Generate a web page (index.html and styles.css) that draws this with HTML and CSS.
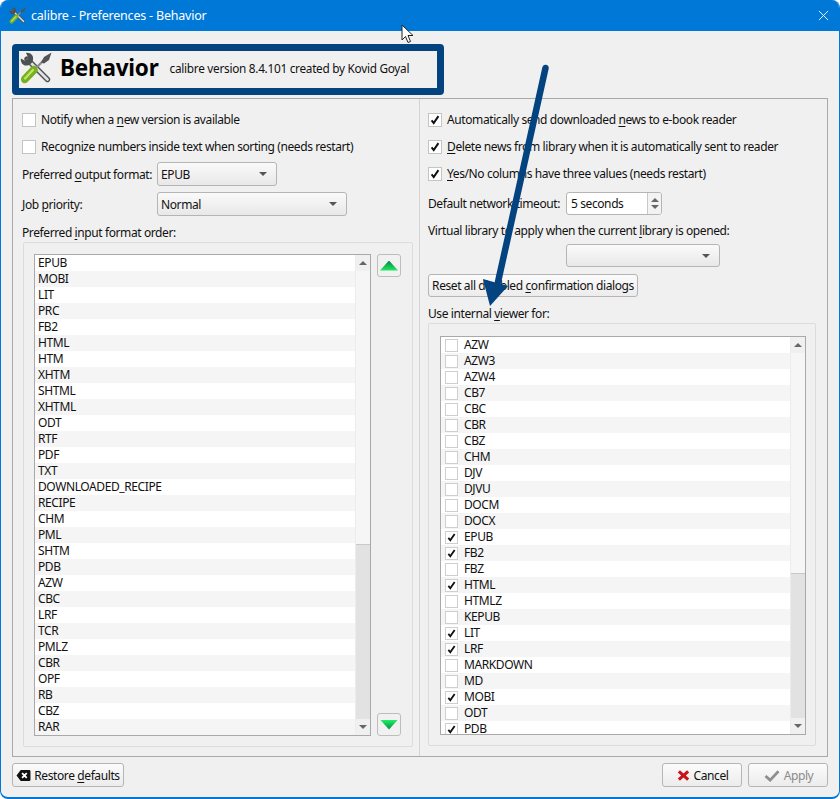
FILE: index.html
```html
<!DOCTYPE html>
<html lang="en">
<head>
<meta charset="utf-8">
<title>calibre - Preferences - Behavior</title>
<link rel="stylesheet" href="styles.css">
</head>
<body>
<div class="window">
  <header class="titlebar">
    <svg class="app-icon" viewBox="0 0 32 32"><use href="#tools"/></svg>
    <span class="title-text">calibre - Preferences - Behavior</span>
    <svg class="close" viewBox="0 0 12 12"><path d="M1 1l10 10M11 1L1 11"/></svg>
  </header>
  <div class="content">
    <div class="banner">
      <svg class="banner-icon" viewBox="0 0 32 32">
        <defs>
          <g id="tools">
            <path d="M7 7l20.500 20.500" stroke="#4f5254" stroke-width="5.400" stroke-linecap="round" fill="none"/>
            <path d="M8 8l19.500 19.500" stroke="#e2e2e2" stroke-width="2.600" stroke-linecap="round" fill="none"/>
            <path d="M.8 6.500L5.500 9l3-3-2.500-5C9.500 0 14 3 13 7.500l-.5 2.500-3 3-2.500.5C3 14 .3 10.500.8 6.500z" fill="#4d5052"/>
            <path d="M15 17l9-9" stroke="#8a8f91" stroke-width="2.400" fill="none"/>
            <path d="M21 10.500l3-5.500L31.500.5 29 8l-5 3.500z" fill="#4f5456"/>
            <path d="M2.500 30.500c-2-1.700-2-4 -.5-6l9.500-10c1.500-1.200 3.500-.8 5 .7s1.800 3.500.6 5L7.500 30c-1.700 1.600-3.400 1.800-5 .5z" fill="#76b021"/>
            <path d="M5 26.500l8-8.500" stroke="#c2e35f" stroke-width="2.400" stroke-linecap="round" fill="none"/>
          </g>
        </defs>
        <use href="#tools"/>
      </svg>
      <span class="banner-title">Behavior</span>
      <span class="banner-sub">calibre version 8.4.101 created by Kovid Goyal</span>
    </div>
    <div class="frame">
      <section class="col col-left">
        <label class="check-row"><span class="box"></span><span>Notify when a <u>n</u>ew version is available</span></label>
        <label class="check-row"><span class="box"></span><span>Recognize numbers inside text when sorting (needs restart)</span></label>
        <div class="field field-output"><span class="field-label">Preferred <u>o</u>utput format:</span><span class="combo combo-output">EPUB<i class="caret"></i></span></div>
        <div class="field field-priority"><span class="field-label">Job <u>p</u>riority:</span><span class="combo combo-priority">Normal<i class="caret"></i></span></div>
        <div class="caption caption-input">Preferred <u>i</u>nput format order:</div>
        <div class="group group-left">
          <div class="list list-left">
            <ul class="rows">
              <li>EPUB</li><li>MOBI</li><li>LIT</li><li>PRC</li><li>FB2</li><li>HTML</li><li>HTM</li><li>XHTM</li><li>SHTML</li><li>XHTML</li><li>ODT</li><li>RTF</li><li>PDF</li><li>TXT</li><li>DOWNLOADED_RECIPE</li><li>RECIPE</li><li>CHM</li><li>PML</li><li>SHTM</li><li>PDB</li><li>AZW</li><li>CBC</li><li>LRF</li><li>TCR</li><li>PMLZ</li><li>CBR</li><li>OPF</li><li>RB</li><li>CBZ</li><li>RAR</li>
            </ul>
            <div class="scrollbar"><span class="sb-btn"><i class="sb-up"></i></span><span class="thumb thumb-left"></span><span class="trough"></span><span class="sb-btn"><i class="sb-down"></i></span></div>
          </div>
          <div class="movers">
            <button class="mover"><i class="tri-up"></i></button>
            <button class="mover"><i class="tri-down"></i></button>
          </div>
        </div>
      </section>
      <section class="col col-right">
        <label class="check-row"><span class="box on"><svg viewBox="0 0 14 14"><path d="M3 7.500l2.500 3L11 2.500"/></svg></span><span>Automatically send downloaded <u>n</u>ews to e-book reader</span></label>
        <label class="check-row"><span class="box on"><svg viewBox="0 0 14 14"><path d="M3 7.500l2.500 3L11 2.500"/></svg></span><span><u>D</u>elete news from library when it is automatically sent to reader</span></label>
        <label class="check-row"><span class="box on"><svg viewBox="0 0 14 14"><path d="M3 7.500l2.500 3L11 2.500"/></svg></span><span><u>Y</u>es/No columns have three values (needs restart)</span></label>
        <div class="field field-timeout"><span class="field-label">Default network timeout:</span>
          <span class="spin"><span class="spin-value">5 seconds</span><span class="spin-btns"><i class="sb-up"></i><i class="sb-down"></i></span></span>
        </div>
        <div class="caption caption-virtual">Virtual library to apply when the current <u>l</u>ibrary is opened:</div>
        <div class="combo combo-virtual"><i class="caret"></i></div>
        <button class="btn btn-reset"><span>Reset all disabled <u>c</u>onfirmation dialogs</span></button>
        <div class="caption caption-viewer">Use internal <u>v</u>iewer for:</div>
        <div class="group group-right">
          <div class="list list-right">
            <ul class="rows checks">
              <li><span class="cell"></span>AZW</li><li><span class="cell"></span>AZW3</li><li><span class="cell"></span>AZW4</li><li><span class="cell"></span>CB7</li><li><span class="cell"></span>CBC</li><li><span class="cell"></span>CBR</li><li><span class="cell"></span>CBZ</li><li><span class="cell"></span>CHM</li><li><span class="cell"></span>DJV</li><li><span class="cell"></span>DJVU</li><li><span class="cell"></span>DOCM</li><li><span class="cell"></span>DOCX</li>
              <li><span class="cell"><svg viewBox="0 0 14 14"><path d="M3 7.500l2.500 3L11 2.500"/></svg></span>EPUB</li>
              <li><span class="cell"><svg viewBox="0 0 14 14"><path d="M3 7.500l2.500 3L11 2.500"/></svg></span>FB2</li>
              <li><span class="cell"></span>FBZ</li>
              <li><span class="cell"><svg viewBox="0 0 14 14"><path d="M3 7.500l2.500 3L11 2.500"/></svg></span>HTML</li>
              <li><span class="cell"></span>HTMLZ</li><li><span class="cell"></span>KEPUB</li>
              <li><span class="cell"><svg viewBox="0 0 14 14"><path d="M3 7.500l2.500 3L11 2.500"/></svg></span>LIT</li>
              <li><span class="cell"><svg viewBox="0 0 14 14"><path d="M3 7.500l2.500 3L11 2.500"/></svg></span>LRF</li>
              <li><span class="cell"></span>MARKDOWN</li><li><span class="cell"></span>MD</li>
              <li><span class="cell"><svg viewBox="0 0 14 14"><path d="M3 7.500l2.500 3L11 2.500"/></svg></span>MOBI</li>
              <li><span class="cell"></span>ODT</li>
              <li><span class="cell"><svg viewBox="0 0 14 14"><path d="M3 7.500l2.500 3L11 2.500"/></svg></span>PDB</li>
            </ul>
            <div class="scrollbar"><span class="sb-btn"><i class="sb-up"></i></span><span class="thumb thumb-right"></span><span class="trough"></span><span class="sb-btn"><i class="sb-down"></i></span></div>
          </div>
        </div>
      </section>
    </div>
    <footer class="footer">
      <button class="btn btn-restore"><svg class="ico" viewBox="0 0 16 14"><path d="M5 1h9a1.500 1.500 0 0 1 1.500 1.500v9A1.500 1.500 0 0 1 14 13H5L.5 7z" fill="#111"/><path d="M6.500 4.500l5 5M11.500 4.500l-5 5" stroke="#fff" stroke-width="2" fill="none"/></svg><span>Restore <u>d</u>efaults</span></button>
      <span class="footer-right">
        <button class="btn btn-action"><svg class="ico" viewBox="0 0 14 14"><path d="M2 2.500l10 9M12 2.500l-10 9" stroke="#c8161d" stroke-width="3.400" fill="none"/></svg><span>Cancel</span></button>
        <button class="btn btn-action btn-disabled"><svg class="ico ico-wide" viewBox="0 0 18 14"><path d="M2 7.500l5 4.500L16 2.500" stroke="#8f8f8f" stroke-width="3" fill="none"/></svg><span>Apply</span></button>
      </span>
    </footer>
  </div>
  <svg class="arrow" viewBox="0 0 840 799"><path d="M545.500 68L498 282" stroke="#03437f" stroke-width="6.500" stroke-linecap="round" fill="none"/><path d="M483 279l25 7-18 20z" fill="#03437f"/></svg>
  <svg class="cursor" viewBox="0 0 14 20"><path d="M1 1v15l3.500-3.500 2.500 6 2.500-1-2.500-6H12z" fill="#fff" stroke="#222" stroke-width="1"/></svg>
</div>
</body>
</html>
```
FILE: styles.css
```css
* { box-sizing: border-box; }
html, body { margin: 0; padding: 0; background: #fff; }
body { font-family: "Noto Sans", sans-serif; font-size: 12px; color: #111; line-height: 16px; letter-spacing: -.4px; }
u { text-underline-offset: 2px; text-decoration-thickness: 1px; }
.window { position: relative; width: 840px; height: 799px; background: #f0f0f0; border: 1px solid #0078d7; border-width: 0 1px 2px; border-radius: 8px; overflow: hidden; }
.titlebar { height: 31px; background: #0078d7; display: flex; align-items: center; padding-left: 8px; color: #fff; }
.app-icon { width: 17px; height: 17px; margin-right: 5px; }
.title-text { font-size: 12.500px; letter-spacing: -.2px; padding-top: 1px; }
.close { width: 11px; height: 11px; margin-left: auto; margin-right: 10px; stroke: #fff; stroke-width: 1; fill: none; }
.content { padding: 13px 11px 0; }
.banner { width: 432px; height: 51px; border: 7px solid #03437f; border-radius: 4px; display: flex; align-items: center; padding: 0 0 3px 1px; background: #f0f0f0; }
.banner-icon { width: 32px; height: 32px; margin-right: 8px; }
.banner-title { font-size: 22.500px; font-weight: 700; color: #000; letter-spacing: -.2px; margin-right: 11px; }
.banner-sub { font-size: 11.800px; letter-spacing: -.28px; }
.frame { margin-top: 3px; height: 659px; border: 1px solid #a9a9a9; display: flex; }
.col { display: flex; flex-direction: column; padding-top: 7px; }
.col-left { width: 407px; padding-left: 9px; border-right: 1px solid #d4d4d4; }
.col-right { flex: 1; padding-left: 8px; }
.check-row { display: flex; align-items: center; height: 27px; white-space: nowrap; }
.box { width: 14px; height: 14px; margin-right: 5px; background: #fff; border: 1px solid #c4c4c4; flex: none; display: flex; }
.box svg, .cell svg { width: 100%; height: 100%; stroke: #111; stroke-width: 2.300; fill: none; }
.field { display: flex; align-items: center; white-space: nowrap; }
.field-label { display: block; padding-top: 1px; }
.field-output { margin-top: 2px; }
.field-priority { margin-top: 6px; }
.field-output .field-label, .field-priority .field-label { width: 135px; }
.combo { display: flex; align-items: center; height: 24px; padding: 1px 0 0 3px; border: 1px solid #b5b5b5; border-radius: 3px; background: linear-gradient(#fafafa, #e8e8e8); position: relative; }
.combo-output { width: 120px; }
.combo-priority { width: 190px; }
.caret { position: absolute; right: 9px; top: 9px; border: 4px solid transparent; border-top: 4px solid #555; border-bottom: 0; }
.caption { white-space: nowrap; }
.caption-input { margin-top: 9px; }
.group { border: 1px solid #dcdcdc; border-radius: 2px; display: flex; }
.group-left { margin: 1px 0 0 1px; width: 390px; height: 505px; padding: 11px 0 0 10px; }
.list { display: flex; border: 1px solid #a9a9a9; background: #fff; overflow: hidden; }
.list-left { width: 337px; height: 482px; }
.rows { list-style: none; margin: 0; padding: 0; flex: 1; overflow: hidden; }
.rows li { height: 16px; line-height: 16px; padding-left: 3px; display: flex; align-items: center; background: #fff; color: #111; }
.rows li:nth-child(even) { background: #f5f5f5; }
.scrollbar { width: 15px; display: flex; flex-direction: column; background: #e3e3e3; border-left: 1px solid #ececec; flex: none; }
.sb-btn { height: 16px; background: #f0f0f0; display: flex; align-items: center; justify-content: center; flex: none; }
.thumb { background: #f6f6f6; border-bottom: 1px solid #c9c9c9; flex: none; }
.thumb-left { height: 274px; }
.thumb-right { height: 221px; }
.trough { flex: 1; background: #e2e2e2; }
.sb-up { display: block; border: 4px solid transparent; border-bottom: 4px solid #666; border-top: 0; }
.sb-down { display: block; border: 4px solid transparent; border-top: 4px solid #666; border-bottom: 0; }
.movers { display: flex; flex-direction: column; justify-content: space-between; margin-left: 6px; height: 482px; }
.mover { width: 24px; height: 23px; padding: 0; border: 1px solid #bdbdbd; border-radius: 3px; background: #f1f1f1; display: flex; align-items: center; justify-content: center; }
.tri-up { display: block; width: 18px; height: 10px; background: linear-gradient(#008a3e, #22ee66); clip-path: polygon(50% 0, 100% 100%, 0 100%); }
.tri-down { display: block; width: 18px; height: 10px; background: linear-gradient(#22ee66, #008a3e); clip-path: polygon(0 0, 100% 0, 50% 100%); }
.field-timeout { margin-top: 5px; height: 23px; }
.field-timeout .field-label { width: 138px; }
.spin { width: 96px; height: 23px; display: flex; border: 1px solid #b5b5b5; border-radius: 3px; background: #fff; overflow: hidden; }
.spin-value { flex: 1; padding-left: 4px; line-height: 21px; }
.spin-btns { width: 14px; border-left: 1px solid #c8c8c8; background: #f3f3f3; display: flex; flex-direction: column; align-items: center; justify-content: center; gap: 3px; }
.caption-virtual { margin-top: 8px; }
.combo-virtual { margin-top: 5px; margin-left: 138px; width: 154px; height: 23px; }
.btn { font: inherit; letter-spacing: inherit; color: #111; border: 1px solid #b5b5b5; border-radius: 3px; background: linear-gradient(#fbfbfb, #ececec); padding: 1px 0 0; display: inline-flex; align-items: center; justify-content: center; white-space: nowrap; }
.btn-reset { margin-top: 7px; width: 210px; height: 23px; }
.caption-viewer { margin-top: 9px; }
.group-right { margin-top: 1px; width: 388px; height: 423px; padding: 12px 0 0 11px; }
.list-right { width: 366px; height: 399px; }
.rows.checks li { padding-left: 4px; }
.cell { width: 13px; height: 13px; margin-right: 6px; border: 1px solid #cfcfcf; background: #fff; flex: none; display: flex; }
.footer { display: flex; justify-content: space-between; margin-top: 6px; }
.btn-restore { width: 112px; height: 24px; }
.footer-right { display: flex; gap: 6px; }
.btn-action { width: 80px; height: 24px; }
.btn-disabled { color: #8a8a8a; }
.ico { width: 15px; height: 13px; margin-right: 3px; flex: none; }
.ico-wide { width: 18px; }
.arrow { position: absolute; left: -1px; top: 0; width: 840px; height: 799px; pointer-events: none; }
.cursor { position: absolute; left: 400px; top: 24px; width: 14px; height: 20px; }
```
